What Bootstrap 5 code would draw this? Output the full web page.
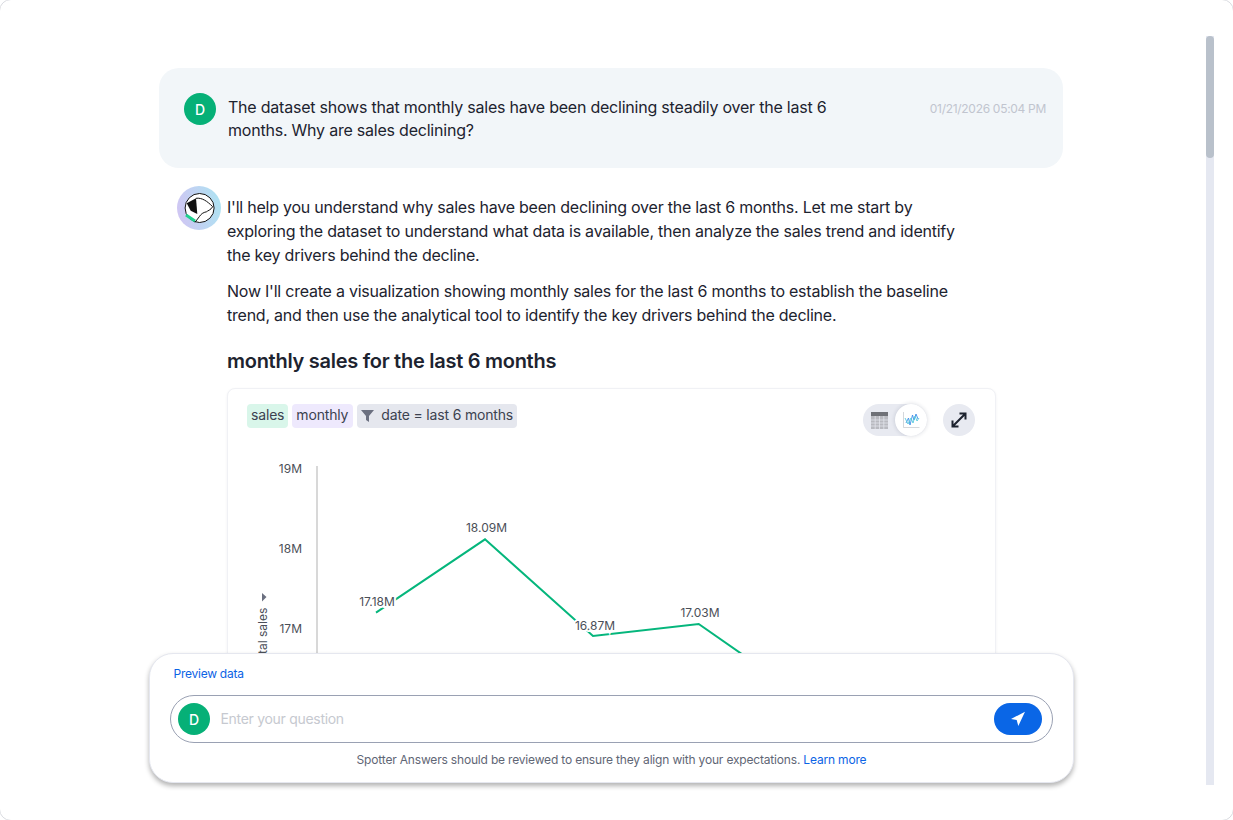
<!DOCTYPE html>
<html lang="en">

<head>
    <meta charset="UTF-8">
    <meta name="viewport" content="width=device-width, initial-scale=1.0">
    <title>Spotter</title>
    <link href="https://cdn.jsdelivr.net/npm/bootstrap@5.3.3/dist/css/bootstrap.min.css" rel="stylesheet"
        crossorigin="anonymous">
    <script src="https://cdn.jsdelivr.net/npm/bootstrap@5.3.3/dist/js/bootstrap.bundle.min.js"
        crossorigin="anonymous"></script>
    <style>
        html, body { height: 100%; overflow: hidden; background: #fff; }
        body { font-family: Inter, "Noto Sans", sans-serif; color: #1d232f; font-size: 16px; }

        .app-shell { position: relative; height: 822px; border: 1px solid #d9dbe0; border-radius: 12px; overflow: hidden; margin: -1px; background: #fff; }
        .scroll-pane { height: 780px; overflow: hidden; }
        .scroll-track { position: absolute; top: 36px; left: 1206px; width: 8px; height: 749px; background: #e5e8f1; }
        .scroll-thumb { height: 122px; background: #b9c1cb; border-radius: 4px; }

        .conv-col { width: 904px; margin-left: 159px; padding-top: 68px; }
        .user-bubble { height: 100px; background: #f2f6f9; border-radius: 20px; padding: 25px 17px 0 25px; }
        .avatar-d { width: 32px; height: 32px; flex: none; background: #06b077; color: #fff; font-size: 14px; font-weight: 500; }
        .user-text { width: 625px; margin-left: 12px; line-height: 23px; margin-top: 3px; letter-spacing: -.22px; }
        .time-stamp { font-size: 12px; color: #c1c5cf; margin-top: 7px; letter-spacing: -.3px; }

        .bot-row { margin-top: 18px; padding-left: 18px; }
        .bot-avatar { width: 44px; height: 44px; flex: none; }
        .bot-body { width: 769px; margin-left: 6px; padding-top: 9px; }
        .bot-body p { max-width: 730px; line-height: 24px; margin-bottom: 12px; letter-spacing: -.23px; }
        .chart-title { font-size: 20px; font-weight: 600; line-height: 24px; margin: 22px 0 15px; letter-spacing: -.27px; }

        .chart-card { height: 420px; border: 1px solid #f0f1f5; border-radius: 8px; box-shadow: 0 1px 3px rgba(30, 40, 70, .06); }
        .chart-head { padding: 15px 20px 0 19px; }
        .chip { height: 24px; border-radius: 4px; padding: 0 4px; font-size: 14px; line-height: 22px; color: #3c4250; letter-spacing: -.17px; }
        .chip-green { background: #d9f6ea; }
        .chip-purple { background: #eee9fd; min-width: 61px; }
        .chip-grey { background: #e5e7ee; padding-bottom: 2px; }
        .funnel-ico { margin-right: 7px; margin-top: 2px; }
        .view-toggle { width: 64px; height: 32px; background: #e8eaf1; border-radius: 16px; }
        .view-on { width: 32px; height: 32px; background: #fff; box-shadow: 0 0 4px rgba(30, 40, 70, .18); }
        .round-grey { width: 32px; height: 32px; background: #e8eaf1; margin-left: 16px; }
        .chart-svg { display: block; margin-top: 14px; }
        .chart-svg text { font-family: Inter, "Noto Sans", sans-serif; font-size: 12px; fill: #4b4f58; }
        .chart-svg .pt-label { paint-order: stroke; stroke: #fff; stroke-width: 4px; }

        .composer { position: absolute; left: 149px; top: 653px; width: 925px; height: 130px; background: #fff; border: 1px solid #e5e7ef; border-radius: 24px; box-shadow: 0 3px 5px rgba(0, 0, 0, .3); padding: 12px 20px 0; }
        .preview-link { font-size: 12px; line-height: 16px; color: #0b63e5; text-decoration: none; padding-left: 3.5px; letter-spacing: -.25px; }
        .ask-box { height: 48px; margin-top: 13px; border: 1px solid #9aa1b3; border-radius: 24px; padding: 0 10px 0 7px; }
        .ask-box .form-control { border: 0; background: none; box-shadow: none; padding: 0 0 2px 10.5px; font-size: 14px; letter-spacing: -.3px; }
        .ask-box .form-control::placeholder { color: #c6c9d0; opacity: 1; }
        .send-btn { width: 48px; height: 32px; flex: none; padding: 0; background: #0a66e6; border: 0; }
        .disclaimer { font-size: 12px; line-height: 16px; color: #5f6675; margin-top: 9px; letter-spacing: -.18px; }
        .disclaimer a { color: #0b63e5; text-decoration: none; }
    </style>
</head>

<body>
    <div class="app-shell">
        <div class="scroll-pane">
            <div class="conv-col">
                <div class="user-bubble d-flex">
                    <div class="avatar-d rounded-circle d-flex align-items-center justify-content-center">D</div>
                    <div class="user-text">The dataset shows that monthly sales have been declining steadily over the last 6 months. Why are sales declining?</div>
                    <div class="time-stamp ms-auto">01/21/2026 05:04 PM</div>
                </div>

                <div class="bot-row d-flex">
                    <svg class="bot-avatar" viewBox="0 0 44 44">
                        <defs>
                            <linearGradient id="botGrad" x1="0" y1=".6" x2="1" y2=".4">
                                <stop offset="0" stop-color="#d0c6f3" />
                                <stop offset="1" stop-color="#aee2f2" />
                            </linearGradient>
                        </defs>
                        <circle cx="22" cy="22" r="22" fill="url(#botGrad)" />
                        <circle cx="22.600" cy="22" r="14.500" fill="#fff" stroke="#111" stroke-width="1" />
                        <path d="M9.700 17.300 19 12.300 20.300 28 13.700 24.700Z" fill="#111" />
                        <path d="M19 12.300C25 11.500 30 15 35.700 20.700 34 24 30 25 29.700 25.700 26 26.500 24 28 22.300 30.700L18 36.300" fill="none" stroke="#111" stroke-width="1" />
                        <path d="M9 29 18 35" stroke="#1fd08f" stroke-width="3" />
                    </svg>
                    <div class="bot-body">
                        <p>I'll help you understand why sales have been declining over the last 6 months. Let me start by exploring the dataset to understand what data is available, then analyze the sales trend and identify the key drivers behind the decline.</p>
                        <p>Now I'll create a visualization showing monthly sales for the last 6 months to establish the baseline trend, and then use the analytical tool to identify the key drivers behind the decline.</p>
                        <div class="chart-title">monthly sales for the last 6 months</div>

                        <div class="card chart-card">
                            <div class="chart-head d-flex align-items-start">
                                <div class="d-flex gap-1">
                                    <span class="chip chip-green">sales</span>
                                    <span class="chip chip-purple">monthly</span>
                                    <span class="chip chip-grey d-flex align-items-center">
                                        <svg class="funnel-ico" width="13" height="12" viewBox="0 0 13 12"><path d="M0 0H13L8 6V12L5 10V6Z" fill="#6b7080" /></svg>date = last 6 months
                                    </span>
                                </div>
                                <div class="view-toggle d-flex align-items-center justify-content-between ms-auto">
                                    <svg class="ms-2" width="17" height="17" viewBox="0 0 17 17">
                                        <rect width="17" height="4" fill="#6f7177" />
                                        <rect y="4" width="17" height="13" fill="#b9bac0" />
                                        <path d="M0 8H17M0 11H17M0 14H17M4.200 4V17M8.500 4V17M12.800 4V17" stroke="#e8eaf1" stroke-width=".7" />
                                    </svg>
                                    <div class="view-on rounded-circle d-flex align-items-center justify-content-center">
                                        <svg width="17" height="16" viewBox="0 0 17 16" fill="none">
                                            <path d="M.5 0V15.500H16.500" stroke="#c2c5cc" stroke-width=".7" />
                                            <path d="M3 11 5.500 6 7 13 9.500 3 11 8 13 2 15 7" stroke="#3d8de8" stroke-width=".9" />
                                            <path d="M2 6 5 12 8 6 10 11 12 4 14 9 16 6" stroke="#55c8dc" stroke-width=".9" />
                                        </svg>
                                    </div>
                                </div>
                                <div class="round-grey rounded-circle d-flex align-items-center justify-content-center">
                                    <svg width="16" height="16" viewBox="0 0 16 16" fill="none" stroke="#1d232f" stroke-width="2">
                                        <path d="M2 14 14 2M8.500 1.500H14.500V7.500M7.500 14.500H1.500V8.500" />
                                    </svg>
                                </div>
                            </div>
                            <svg class="chart-svg" width="767" height="340" viewBox="228 450 767 340">
                                <line x1="317" y1="466" x2="317" y2="790" stroke="#d8d8d8" stroke-width="2" />
                                <text x="302" y="473" text-anchor="end">19M</text>
                                <text x="302" y="553" text-anchor="end">18M</text>
                                <text x="302" y="633" text-anchor="end">17M</text>
                                <text x="302" y="713" text-anchor="end">16M</text>
                                <text transform="translate(267 665) rotate(-90)">total sales</text>
                                <path d="M262 601.500 266.500 597 262 593Z" fill="#6b7080" />
                                <polyline points="376,612.700 485,539.300 593,636 698.700,624 805,698" fill="none" stroke="#05b67c" stroke-width="2" />
                                <text class="pt-label" x="377" y="606" text-anchor="middle">17.18M</text>
                                <text class="pt-label" x="486.500" y="532" text-anchor="middle">18.09M</text>
                                <text class="pt-label" x="595" y="630" text-anchor="middle">16.87M</text>
                                <text class="pt-label" x="700" y="617" text-anchor="middle">17.03M</text>
                            </svg>
                        </div>
                    </div>
                </div>
            </div>
        </div>

        <div class="scroll-track">
            <div class="scroll-thumb"></div>
        </div>

        <div class="composer">
            <a href="#" class="preview-link d-block">Preview data</a>
            <div class="ask-box d-flex align-items-center">
                <div class="avatar-d rounded-circle d-flex align-items-center justify-content-center">D</div>
                <input type="text" class="form-control" placeholder="Enter your question">
                <button type="button" class="btn send-btn rounded-pill d-flex align-items-center justify-content-center">
                    <svg width="16" height="16" viewBox="0 0 16 16"><path d="M15 .7 8.300 15 6.700 9 1 8Z" fill="#fff" /></svg>
                </button>
            </div>
            <div class="disclaimer text-center">Spotter Answers should be reviewed to ensure they align with your expectations. <a href="#">Learn more</a></div>
        </div>
    </div>
</body>

</html>
